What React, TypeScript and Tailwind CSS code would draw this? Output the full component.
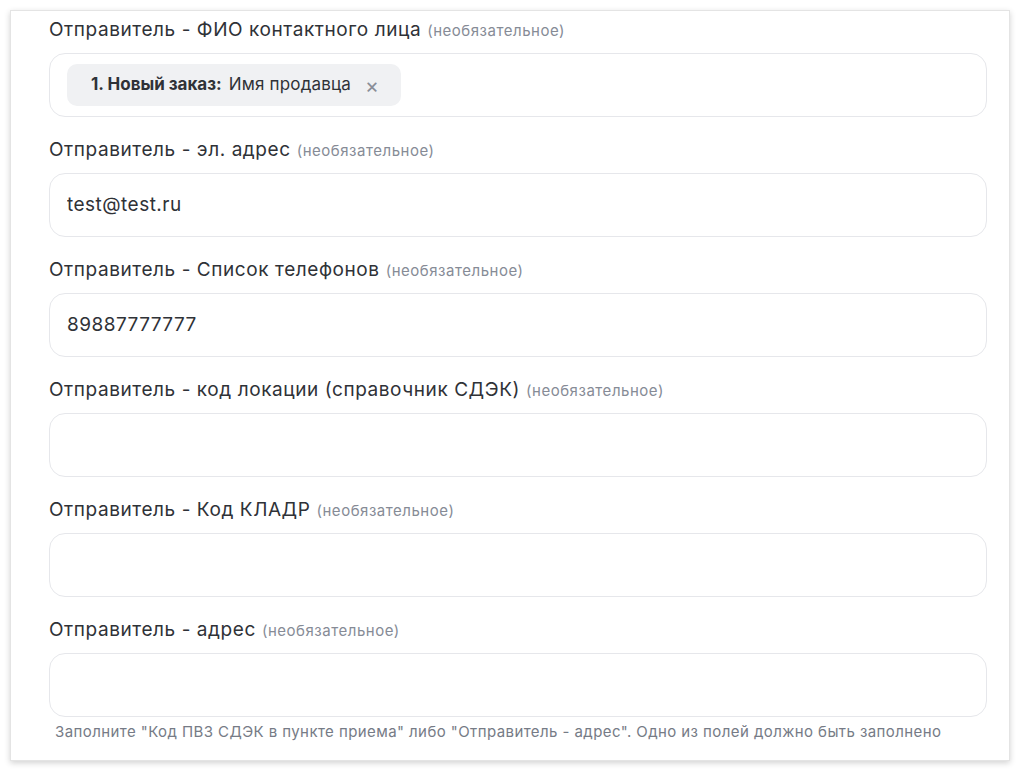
import React from 'react';

const font = { fontFamily: 'Inter, "Noto Sans", sans-serif' };

type FieldProps = {
  label: string;
  value?: string;
  children?: React.ReactNode;
};

function Label({ text }: { text: string }) {
  return (
    <label className="mb-[9px] flex h-7 items-baseline gap-[6px] text-[19px] leading-7 tracking-[0.03em] text-[#2f3237]">
      <span>{text}</span>
      <span className="text-[15px] tracking-[0.035em] text-[#868b96]">(необязательное)</span>
    </label>
  );
}

function Field({ label, value, children }: FieldProps) {
  return (
    <div className="mb-[19px]">
      <Label text={label} />
      <div className="flex h-16 items-center rounded-2xl border border-[#e6e7eb] bg-white px-[17px]">
        {children ?? (
          <input
            readOnly
            value={value ?? ''}
            className="w-full bg-transparent text-[19px] tracking-[0.025em] text-[#2f3237] outline-none"
          />
        )}
      </div>
    </div>
  );
}

export default function App() {
  return (
    <div className="h-[770px] w-[1020px] bg-white p-[10px]" style={font}>
      <div className="h-[751px] w-[1000px] overflow-hidden border border-[#e4e4e4] bg-white pl-[38px] pr-[22px] pt-[5px] shadow-[0_2px_6px_rgba(0,0,0,0.18)]">
        <Field label="Отправитель - ФИО контактного лица">
          <div className="flex h-[42px] items-center rounded-[10px] bg-[#f0f1f3] pl-6 pr-[22px] text-[17px] text-[#2f3237]">
            <span className="font-bold">1. Новый заказ:</span>
            <span className="ml-[7px] tracking-[0.01em]">Имя продавца</span>
            <span className="ml-[14px] text-[21px] leading-none text-[#8a8e98]">×</span>
          </div>
        </Field>
        <Field label="Отправитель - эл. адрес" value="test@test.ru" />
        <Field label="Отправитель - Список телефонов" value="89887777777" />
        <Field label="Отправитель - код локации (справочник СДЭК)" />
        <Field label="Отправитель - Код КЛАДР" />
        <div>
          <Label text="Отправитель - адрес" />
          <div className="h-16 rounded-2xl border border-[#e6e7eb] bg-white" />
          <p className="mt-[5px] pl-[6px] text-[15px] leading-5 tracking-[0.028em] text-[#767b86]">
            Заполните "Код ПВЗ СДЭК в пункте приема" либо "Отправитель - адрес". Одно из полей должно быть заполнено
          </p>
        </div>
      </div>
    </div>
  );
}
